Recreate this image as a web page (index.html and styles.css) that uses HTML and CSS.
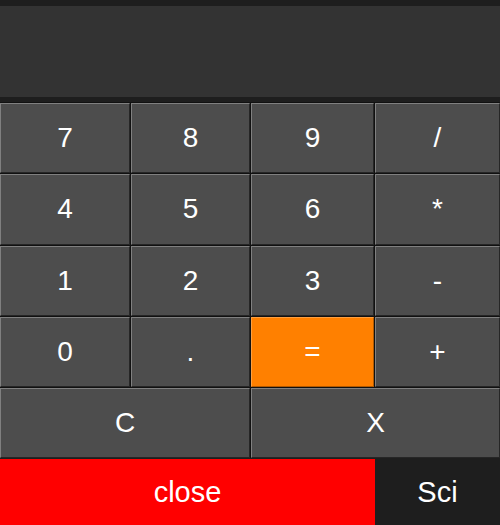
FILE: index.html
```html
<!DOCTYPE html>
<html>
<head>
<meta charset="utf-8">
<link rel="stylesheet" href="styles.css">
</head>
<body>
<div class="app">
  <div class="display"></div>
  <div class="keys">
    <button class="key">7</button>
    <button class="key">8</button>
    <button class="key">9</button>
    <button class="key">/</button>
    <button class="key">4</button>
    <button class="key">5</button>
    <button class="key">6</button>
    <button class="key">*</button>
    <button class="key">1</button>
    <button class="key">2</button>
    <button class="key">3</button>
    <button class="key">-</button>
    <button class="key">0</button>
    <button class="key">.</button>
    <button class="key equals">=</button>
    <button class="key">+</button>
    <button class="key wide">C</button>
    <button class="key wide">X</button>
  </div>
  <div class="footer">
    <button class="close">close</button>
    <button class="sci">Sci</button>
  </div>
</div>
</body>
</html>
```
FILE: styles.css
```css
html, body {
  margin: 0;
  padding: 0;
  background: #1e1e1e;
}
.app {
  width: 500px;
  height: 525px;
  display: flex;
  flex-direction: column;
  background: #1e1e1e;
  font-family: "Liberation Sans", Arial, sans-serif;
}
.display {
  margin-top: 6px;
  height: 91px;
  background: #333333;
}
.keys {
  margin-top: 5px;
  display: grid;
  grid-template-columns: 130px 119px 123px 1fr;
  grid-auto-rows: 70.25px;
  gap: 1px;
  background: #111111;
  padding-top: 1px;
}
.key {
  margin: 0;
  padding: 0;
  background: #4d4d4d;
  color: #ffffff;
  font-family: inherit;
  font-size: 28px;
  border: 1px solid;
  border-color: #808080 #262626 #262626 #808080;
}
.key.wide {
  grid-column: span 2;
}
.key.equals {
  background: #ff8000;
  border-color: #ffa040 #b35a00 #b35a00 #ffa040;
}
.footer {
  margin-top: 1px;
  flex: 1;
  display: flex;
}
.close, .sci {
  margin: 0;
  padding: 0;
  border: none;
  color: #ffffff;
  font-family: inherit;
  font-size: 29px;
}
.close {
  width: 375px;
  background: #ff0000;
}
.sci {
  flex: 1;
  background: #1e1e1e;
}
```
